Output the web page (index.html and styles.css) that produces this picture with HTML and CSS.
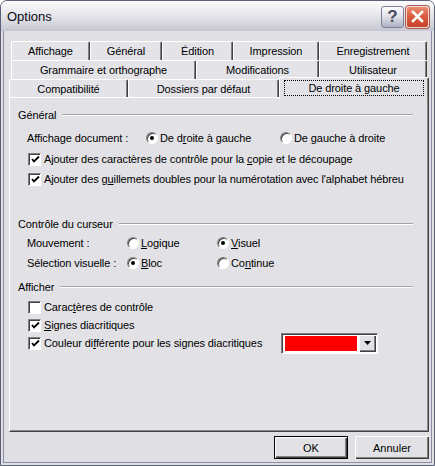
FILE: index.html
```html
<!DOCTYPE html>
<html lang="fr">
<head>
  <meta charset="UTF-8" />
  <title>Options</title>
  <link rel="stylesheet" href="styles.css">
</head>
<body>
  <div class="window">
    <div class="titlebar">
      <span class="title">Options</span>
      <div class="caption-buttons">
        <button class="cap-btn cap-help">?</button>
        <button class="cap-btn cap-close">
          <svg width="13" height="13" viewBox="0 0 13 13">
            <path d="M2 2 L11 11 M11 2 L2 11" stroke="#fff" stroke-width="2.6" stroke-linecap="square" />
          </svg>
        </button>
      </div>
    </div>

    <div class="client">
      <div class="tabs">
        <div class="tab-row row-1">
          <div class="tab">Affichage</div>
          <div class="tab">Général</div>
          <div class="tab">Édition</div>
          <div class="tab">Impression</div>
          <div class="tab">Enregistrement</div>
        </div>
        <div class="tab-row row-2">
          <div class="tab">Grammaire et orthographe</div>
          <div class="tab">Modifications</div>
          <div class="tab">Utilisateur</div>
        </div>
        <div class="tab-row row-3">
          <div class="tab">Compatibilité</div>
          <div class="tab">Dossiers par défaut</div>
          <div class="tab tab-active"><span class="focus">De droite à gauche</span></div>
        </div>
      </div>

      <div class="panel">
        <div class="group group-general">
          <div class="group-title">Général</div>
          <div class="group-body">
            <div class="field-row doc-row">
              <span>Affichage document :</span>
              <label class="radio"><span class="radio-dot checked"></span><span>De d<u>r</u>oite à gauche</span></label>
              <label class="radio"><span class="radio-dot"></span><span>De <u>g</u>auche à droite</span></label>
            </div>
            <div class="field-row check-first">
              <label class="check"><span class="box checked"><svg width="9" height="9" viewBox="0 0 9 9"><path d="M1 4 L3 6.5 L8 1.5" stroke="#000" stroke-width="1.8" fill="none" /></svg></span><span>Ajouter des caractères de contrôle pour la <u>c</u>opie et le découpage</span></label>
            </div>
            <div class="field-row">
              <label class="check"><span class="box checked"><svg width="9" height="9" viewBox="0 0 9 9"><path d="M1 4 L3 6.5 L8 1.5" stroke="#000" stroke-width="1.8" fill="none" /></svg></span><span>Ajouter des g<u>u</u>illemets doubles pour la numérotation avec l'alphabet hébreu</span></label>
            </div>
          </div>
        </div>

        <div class="group group-cursor">
          <div class="group-title">Contrôle du curseur</div>
          <div class="group-body">
            <div class="field-row cursor-row">
              <span>Mouvement :</span>
              <label class="radio"><span class="radio-dot"></span><span><u>L</u>ogique</span></label>
              <label class="radio"><span class="radio-dot checked"></span><span><u>V</u>isuel</span></label>
            </div>
            <div class="field-row cursor-row">
              <span>Sélection visuelle :</span>
              <label class="radio"><span class="radio-dot checked"></span><span><u>B</u>loc</span></label>
              <label class="radio"><span class="radio-dot"></span><span>Co<u>n</u>tinue</span></label>
            </div>
          </div>
        </div>

        <div class="group group-display">
          <div class="group-title">Afficher</div>
          <div class="group-body">
            <div class="field-row short">
              <label class="check"><span class="box"></span><span>Carac<u>t</u>ères de contrôle</span></label>
            </div>
            <div class="field-row short">
              <label class="check"><span class="box checked"><svg width="9" height="9" viewBox="0 0 9 9"><path d="M1 4 L3 6.5 L8 1.5" stroke="#000" stroke-width="1.8" fill="none" /></svg></span><span><u>S</u>ignes diacritiques</span></label>
            </div>
            <div class="field-row short color-row">
              <label class="check"><span class="box checked"><svg width="9" height="9" viewBox="0 0 9 9"><path d="M1 4 L3 6.5 L8 1.5" stroke="#000" stroke-width="1.8" fill="none" /></svg></span><span>Couleur di<u>f</u>férente pour les signes diacritiques</span></label>
              <div class="color-combo">
                <span class="swatch"></span>
                <span class="drop-btn"><svg width="7" height="4" viewBox="0 0 7 4"><path d="M0 0 H7 L3.5 4 Z" fill="#000" /></svg></span>
              </div>
            </div>
          </div>
        </div>
      </div>

      <div class="footer">
        <button class="btn btn-default">OK</button>
        <button class="btn">Annuler</button>
      </div>
    </div>
  </div>
</body>
</html>
```

FILE: styles.css
```css
body {
  margin: 0;
  font-family: "Liberation Sans", Arial, sans-serif;
  font-size: 11px;
  letter-spacing: -0.1px;
  color: #000;
  background: #fff;
}
.window {
  width: 435px;
  height: 466px;
  box-sizing: border-box;
  border: 1px solid #5d6079;
  border-radius: 7px 7px 0 0;
  background: #e0dfe4;
  display: flex;
  flex-direction: column;
  overflow: hidden;
}

/* barre de titre */
.titlebar {
  height: 30px;
  flex: none;
  display: flex;
  align-items: center;
  justify-content: space-between;
  padding: 0 5px 0 6px;
  background: linear-gradient(#fbfbfc, #ececf0 35%, #d6d6de 75%, #c4c5d1);
}
.title {
  font-size: 13px;
  letter-spacing: 0;
  color: #0a0a14;
}
.caption-buttons {
  display: flex;
  gap: 2px;
  padding-top: 1px;
}
.cap-btn {
  width: 23px;
  height: 22px;
  box-sizing: border-box;
  padding: 0;
  border-radius: 3px;
  display: flex;
  align-items: center;
  justify-content: center;
}
.cap-help {
  border: 1px solid #7d8096;
  background: linear-gradient(#fdfdfe, #dedee6 50%, #aeb0c2);
  font-family: "Liberation Sans", Arial, sans-serif;
  font-weight: bold;
  font-size: 17px;
  color: #4a4c5e;
}
.cap-close {
  border: 1px solid #f4d8d0;
  box-shadow: 0 0 0 1px #a55b52;
  background: linear-gradient(#ec8e74, #d9593d 50%, #c5422a);
}

/* zone cliente */
.client {
  flex: 1;
  margin: 0 2px 2px;
  border: 1px solid #8c8ea6;
  border-top: none;
  padding: 10px 2px 0 5px;
  display: flex;
  flex-direction: column;
}

/* onglets */
.tab-row {
  display: grid;
}
.row-1,
.row-2 {
  height: 19px;
  margin: 0 2px;
}
.row-1 {
  grid-template-columns: 79px 72px 71px 86px 1fr;
}
.row-2 {
  grid-template-columns: 185px 123px 1fr;
}
.row-3 {
  height: 18px;
  grid-template-columns: 119px 151px 1fr;
}
.tab {
  box-sizing: border-box;
  border-top: 1px solid #fff;
  border-left: 1px solid #fff;
  border-right: 1px solid #404040;
  box-shadow: inset -1px 0 #808080;
  border-radius: 2px 2px 0 0;
  background: #e4e4e8;
  text-align: center;
  line-height: 18px;
  white-space: nowrap;
}
.tab-active {
  position: relative;
  z-index: 1;
  margin: -2px 0 -1px 0;
  padding: 2px 4px 0 4px;
  background: #e2e2e6;
}
.focus {
  display: block;
  border: 1px dotted #000;
  line-height: 14px;
}

/* panneau */
.panel {
  height: 335px;
  box-sizing: border-box;
  border-top: 1px solid #fff;
  border-left: 1px solid #fff;
  border-right: 1px solid #404040;
  border-bottom: 1px solid #404040;
  box-shadow: inset -1px -1px #8a8a90;
  background: #e2e2e6;
  padding: 10px 15px 0 8px;
}
.group-title {
  height: 14px;
  display: flex;
  align-items: center;
  gap: 6px;
  white-space: nowrap;
}
.group-title::after {
  content: "";
  flex: 1;
  border-top: 1px solid #a3a3aa;
  border-bottom: 1px solid #fff;
}
.group-body {
  padding-left: 9px;
}
.group-general .group-body {
  padding-top: 6px;
}
.group-cursor {
  margin-top: 28px;
}
.group-cursor .group-body {
  padding-top: 2px;
}
.group-display {
  margin-top: 7px;
}
.group-display .group-body {
  padding-top: 4px;
}

.field-row {
  height: 20px;
  display: flex;
  align-items: center;
  white-space: nowrap;
}
.field-row.short {
  height: 18px;
}
.check-first {
  margin-top: 1px;
}
.doc-row {
  display: grid;
  grid-template-columns: 119px 134px auto;
}
.cursor-row {
  display: grid;
  grid-template-columns: 100px 90px auto;
}

.radio,
.check {
  display: flex;
  align-items: center;
}
.radio {
  gap: 2px;
}
.check {
  gap: 3px;
  margin-left: 1px;
}
.radio-dot {
  width: 12px;
  height: 12px;
  box-sizing: border-box;
  border-radius: 50%;
  border: 1px solid;
  border-color: #808080 #fff #fff #808080;
  box-shadow: inset 1px 1px #404040;
  background: #fff;
  display: flex;
  align-items: center;
  justify-content: center;
}
.radio-dot.checked::after {
  content: "";
  width: 4px;
  height: 4px;
  border-radius: 50%;
  background: #000;
}
.box {
  width: 13px;
  height: 13px;
  box-sizing: border-box;
  border: 1px solid;
  border-color: #808080 #fff #fff #808080;
  box-shadow: inset 1px 1px #404040;
  background: #fff;
  display: flex;
  align-items: center;
  justify-content: center;
  padding: 1px 0 0 1px;
}

/* liste des couleurs */
.color-row .check {
  width: 253px;
}
.color-combo {
  width: 97px;
  height: 21px;
  box-sizing: border-box;
  border: 1px solid;
  border-color: #808080 #fff #fff #808080;
  box-shadow: inset 1px 1px #404040;
  background: #fff;
  display: flex;
  padding: 2px 1px 1px 3px;
  gap: 2px;
}
.swatch {
  flex: 1;
  background: #f00;
  margin-bottom: 1px;
}
.drop-btn {
  width: 17px;
  box-sizing: border-box;
  background: #e2e2e6;
  box-shadow: inset 1px 1px #fff, inset -1px -1px #404040, inset -2px -2px #808080;
  display: flex;
  align-items: center;
  justify-content: center;
  margin-top: -1px;
}

/* boutons */
.footer {
  display: flex;
  justify-content: flex-end;
  gap: 7px;
  margin-top: 4px;
}
.btn {
  width: 74px;
  height: 23px;
  box-sizing: border-box;
  padding: 0;
  font-family: "Liberation Sans", Arial, sans-serif;
  font-size: 11px;
  color: #000;
  background: #e2e2e6;
  border: none;
  box-shadow: inset 1px 1px #fff, inset -1px -1px #404040, inset -2px -2px #808080;
}
.btn-default {
  border: 1px solid #000;
}
```
